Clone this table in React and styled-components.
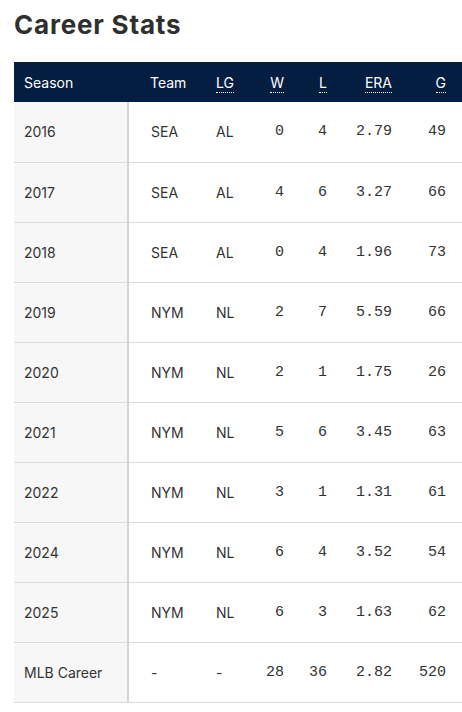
import React from "react";
import styled, { createGlobalStyle } from "styled-components";

const GlobalStyle = createGlobalStyle`
  body {
    margin: 0;
    background: #fff;
    font-family: "Inter", "Open Sans", sans-serif;
  }
`;

const seasons = [
  { season: "2016", team: "SEA", lg: "AL", w: 0, l: 4, era: "2.79", g: 49 },
  { season: "2017", team: "SEA", lg: "AL", w: 4, l: 6, era: "3.27", g: 66 },
  { season: "2018", team: "SEA", lg: "AL", w: 0, l: 4, era: "1.96", g: 73 },
  { season: "2019", team: "NYM", lg: "NL", w: 2, l: 7, era: "5.59", g: 66 },
  { season: "2020", team: "NYM", lg: "NL", w: 2, l: 1, era: "1.75", g: 26 },
  { season: "2021", team: "NYM", lg: "NL", w: 5, l: 6, era: "3.45", g: 63 },
  { season: "2022", team: "NYM", lg: "NL", w: 3, l: 1, era: "1.31", g: 61 },
  { season: "2024", team: "NYM", lg: "NL", w: 6, l: 4, era: "3.52", g: 54 },
  { season: "2025", team: "NYM", lg: "NL", w: 6, l: 3, era: "1.63", g: 62 },
  { season: "MLB Career", team: "-", lg: "-", w: 28, l: 36, era: "2.82", g: 520 },
];

const columns = [
  { key: "season", label: "Season", width: 114, align: "left" },
  { key: "team", label: "Team", width: 88, align: "left" },
  { key: "lg", label: "LG", width: 44, align: "left", abbr: true },
  { key: "w", label: "W", width: 24, align: "right", abbr: true, mono: true },
  { key: "l", label: "L", width: 43, align: "right", abbr: true, mono: true },
  { key: "era", label: "ERA", width: 65, align: "right", abbr: true, mono: true },
  { key: "g", label: "G", width: 70, align: "right", abbr: true, mono: true, last: true },
];

const App = () => {
  return (
    <Page>
      <GlobalStyle />
      <Title>Career Stats</Title>
      <Table>
        <colgroup>
          {columns.map((c) => (
            <col key={c.key} style={{ width: c.width }} />
          ))}
        </colgroup>
        <thead>
          <tr>
            {columns.map((c) =>
              c.key === "season" ? (
                <SeasonHead key={c.key}>{c.label}</SeasonHead>
              ) : (
                <HeadCell key={c.key} $align={c.align} $last={c.last}>
                  {c.abbr ? <Abbr>{c.label}</Abbr> : c.label}
                </HeadCell>
              )
            )}
          </tr>
        </thead>
        <tbody>
          {seasons.map((row) => (
            <Row key={row.season}>
              <SeasonCell>{row.season}</SeasonCell>
              {columns.slice(1).map((c) => (
                <Cell
                  key={c.key}
                  $align={c.align}
                  $mono={c.mono}
                  $last={c.last}
                >
                  {row[c.key]}
                </Cell>
              ))}
            </Row>
          ))}
        </tbody>
      </Table>
    </Page>
  );
};

const Page = styled.div`
  padding: 0 0 0 14px;
  width: 448px;
`;

const Title = styled.h2`
  margin: 0;
  padding-top: 9px;
  height: 62px;
  box-sizing: border-box;
  font-family: "Inter", sans-serif;
  font-size: 26px;
  font-weight: 700;
  letter-spacing: 0.8px;
  color: #2f2f2f;
  line-height: 32px;
`;

const Table = styled.table`
  width: 448px;
  table-layout: fixed;
  border-collapse: collapse;
  border-spacing: 0;
`;

const HeadCell = styled.th`
  height: 40px;
  padding: 0 ${(p) => (p.$last ? "16px" : "0")} 0 0;
  background: #041e42;
  color: #fff;
  font-size: 14px;
  font-weight: 400;
  text-align: ${(p) => p.$align};
  &:nth-child(2) {
    padding-left: 22px;
  }
`;

const SeasonHead = styled.th`
  height: 40px;
  padding: 0 0 0 10px;
  background: #041e42;
  color: #fff;
  font-size: 14px;
  font-weight: 400;
  text-align: left;
`;

const Abbr = styled.span`
  border-bottom: 1px dotted #fff;
  padding-bottom: 1px;
`;

const Row = styled.tr`
  height: 60px;
  border-bottom: 1px solid #dcdcdc;
`;

const SeasonCell = styled.td`
  padding: 0 0 0 10px;
  background: #f7f7f7;
  border-right: 2px solid #d4d4d4;
  color: #333;
  font-size: 14px;
  white-space: nowrap;
`;

const Cell = styled.td`
  padding: 0 ${(p) => (p.$last ? "16px" : "0")} 0 0;
  color: #333;
  font-size: ${(p) => (p.$mono ? "15px" : "14px")};
  font-family: ${(p) =>
    p.$mono ? '"Liberation Mono", monospace' : '"Inter", sans-serif'};
  text-align: ${(p) => p.$align};
  &:nth-child(2) {
    padding-left: 22px;
  }
`;

export default App;
